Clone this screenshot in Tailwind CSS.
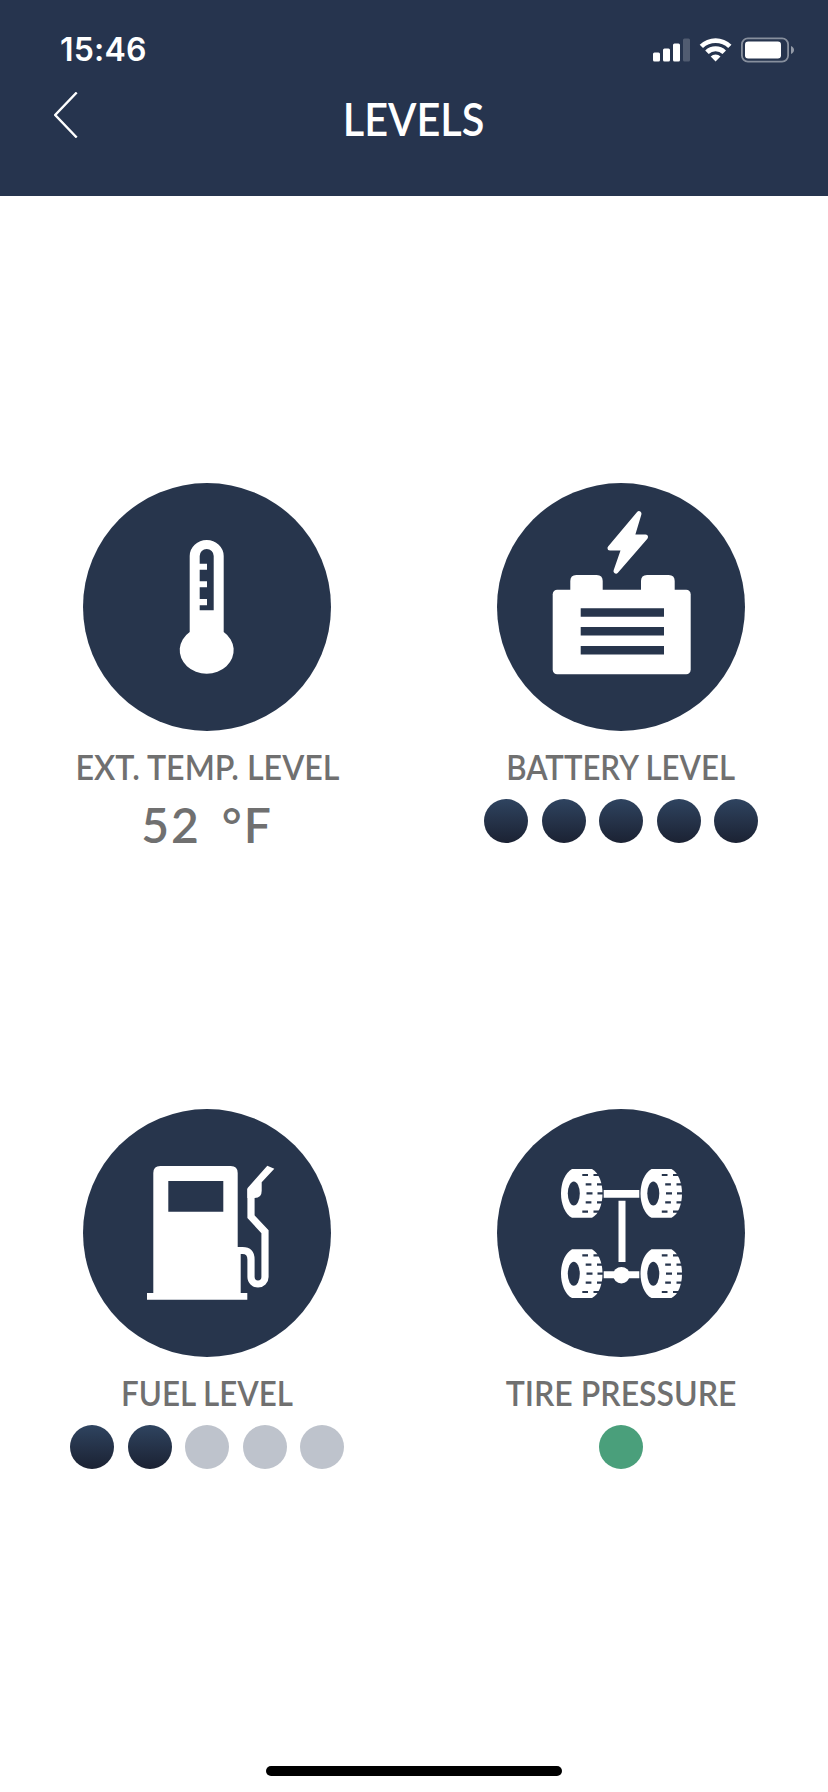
<!DOCTYPE html>
<html lang="en">

<head>
    <meta charset="UTF-8">
    <meta name="viewport" content="width=device-width, initial-scale=1.0">
    <title>Levels</title>

    <!-- Tailwind CSS -->
    <script src="https://cdn.jsdelivr.net/npm/@tailwindcss/browser@4"></script>
</head>

<body class="bg-white font-['Lato',sans-serif] font-semibold text-[#707070]">
    <div class="relative flex flex-col h-[1792px] w-[828px] overflow-hidden">

        <!-- Header -->
        <header class="h-[196px] bg-[#26344e] text-white">
            <!-- Status bar -->
            <div class="flex justify-between items-center h-[74px] pt-[25px] pl-[60px] pr-[34px]">
                <span class="font-['Inter',sans-serif] font-semibold text-[32px] leading-none tracking-[0.2px]">15:46</span>
                <svg class="w-[142px] h-[26px]" viewBox="652 36.5 142 26" fill="white">
                    <rect x="653" y="52" width="7" height="9" rx="1.5" />
                    <rect x="663" y="48" width="7" height="13" rx="1.5" />
                    <rect x="673" y="43" width="7" height="18" rx="1.5" />
                    <rect x="683" y="38" width="7" height="23" rx="1.5" fill-opacity=".2" />
                    <path d="M699.7 44.2a22.8 22.8 0 0 1 31.8 0l-3.3 3.4a18 18 0 0 0-25.2 0z" />
                    <path d="M705.2 50a15 15 0 0 1 20.8 0l-3.5 3.5a10 10 0 0 0-13.8 0z" />
                    <path d="M710.7 56a7 7 0 0 1 9.8 0l-4.9 5z" />
                    <rect x="741.9" y="37.9" width="46.2" height="23.2" rx="6" fill="none" stroke="white" stroke-opacity=".45" stroke-width="1.8" />
                    <rect x="745" y="41" width="36" height="17" rx="3.2" />
                    <path d="M791 45.500c4 1.500 4 6.500 0 8z" fill-opacity=".5" />
                </svg>
            </div>
            <!-- Title bar -->
            <div class="grid grid-cols-[1fr_auto_1fr] items-center h-[90px]">
                <svg class="w-6 h-[46px] ml-[54px] -mt-2" viewBox="0 0 24 46" fill="none" stroke="white" stroke-width="2.4">
                    <path d="M22.700.500 1.200 23l21.500 22.500" />
                </svg>
                <h1 class="text-[46px] leading-none scale-x-[0.9]">LEVELS</h1>
            </div>
        </header>

        <!-- Level cards -->
        <main class="grid grid-cols-2 auto-rows-[626px] pt-[287px] text-[35px]">
            <section class="flex flex-col items-center">
                <svg class="size-[248px]" viewBox="0 0 248 248" fill="white">
                    <circle cx="124" cy="124" r="124" fill="#27354c" />
                    <path d="M106.700 73a17 16 0 0 1 34 0v76a27 23.500 0 1 1-34 0z" />
                    <path d="M116.700 73a7 7 0 0 1 14 0v54.300h-14v-5h7.300V116h-7.300v-11.700h7.300v-6h-7.300V86.700h7.300v-6h-7.300z" fill="#27354c" />
                </svg>
                <h2 class="mt-[17px] leading-[36px] whitespace-nowrap scale-x-[0.92]">EXT. TEMP. LEVEL</h2>
                <p class="mt-[19px] text-[48px] leading-[44px] tracking-[2px] [word-spacing:7px] whitespace-nowrap">52 °F</p>
            </section>

            <section class="flex flex-col items-center">
                <svg class="size-[248px]" viewBox="0 0 248 248" fill="white">
                    <circle cx="124" cy="124" r="124" fill="#27354c" />
                    <path d="M142 30.700 135 54h13.500L119 88l8-23h-14z" stroke="white" stroke-width="5" stroke-linejoin="round" />
                    <path d="M73.300 110V98q0-6 6-6h20.400q6 0 6 6v12zM144 110V98q0-6 6-6h21.700q6 0 6 6v12z" />
                    <rect x="55.700" y="106.700" width="138" height="84.600" rx="4.500" />
                    <path d="M83.700 125.300H167v8.400H83.700zM83.700 144H167v8.400H83.700zM83.700 163H167v8.400H83.700z" fill="#27354c" />
                </svg>
                <h2 class="mt-[17px] leading-[36px] whitespace-nowrap scale-x-[0.89]">BATTERY LEVEL</h2>
                <div class="flex justify-between w-[274px] mt-[15px]">
                    <span class="size-11 rounded-full bg-linear-to-b from-[#2f4460] to-[#1b2233]"></span>
                    <span class="size-11 rounded-full bg-linear-to-b from-[#2f4460] to-[#1b2233]"></span>
                    <span class="size-11 rounded-full bg-linear-to-b from-[#2f4460] to-[#1b2233]"></span>
                    <span class="size-11 rounded-full bg-linear-to-b from-[#2f4460] to-[#1b2233]"></span>
                    <span class="size-11 rounded-full bg-linear-to-b from-[#2f4460] to-[#1b2233]"></span>
                </div>
            </section>

            <section class="flex flex-col items-center">
                <svg class="size-[248px]" viewBox="0 0 248 248" fill="white">
                    <circle cx="124" cy="124" r="124" fill="#27354c" />
                    <path d="M70.300 64q0-7 7-7h70.400q7 0 7 7v80h3v40h6.600v6.700H64V184h6.300z" />
                    <path d="M85.300 72h55v30.700h-55z" fill="#27354c" />
                    <path d="M154 141.500h5.500q8.500 0 8.500 9V168a7 7 0 0 0 14 0v-45.300l-14-15V80" fill="none" stroke="white" stroke-width="7.200" />
                    <path d="m164.400 79.300 19.900-22.600 7 3-12.600 13.600v8.400q0 7.300-7 7.300h-7.300z" />
                </svg>
                <h2 class="mt-[17px] leading-[36px] whitespace-nowrap scale-x-[0.895]">FUEL LEVEL</h2>
                <div class="flex justify-between w-[274px] mt-[15px]">
                    <span class="size-11 rounded-full bg-linear-to-b from-[#2f4460] to-[#1b2233]"></span>
                    <span class="size-11 rounded-full bg-linear-to-b from-[#2f4460] to-[#1b2233]"></span>
                    <span class="size-11 rounded-full bg-[#bec3cc]"></span>
                    <span class="size-11 rounded-full bg-[#bec3cc]"></span>
                    <span class="size-11 rounded-full bg-[#bec3cc]"></span>
                </div>
            </section>

            <section class="flex flex-col items-center">
                <svg class="size-[248px]" viewBox="0 0 248 248" fill="white">
                    <defs>
                        <g id="tire">
                            <path d="M11 0h20c7 4 10.500 14 10.500 24.400S38 45 31 48.700H11C4 45 0 35 0 24.400S4 4 11 0z" />
                            <ellipse cx="12.800" cy="24.400" rx="6" ry="12" fill="#27354c" />
                            <path d="M21.300 6H27M32.500 6H39M24.700 15.300h5.700M36 15.300h6M25.500 24.400h6M36.500 24.400h6M24.700 33.400h5.700M36 33.400h6M21.300 42.700H27M32.500 42.700H39" stroke="#27354c" stroke-width="2.200" />
                        </g>
                    </defs>
                    <circle cx="124" cy="124" r="124" fill="#27354c" />
                    <use href="#tire" x="64" y="60" />
                    <use href="#tire" x="143.500" y="60" />
                    <use href="#tire" x="64" y="140.300" />
                    <use href="#tire" x="143.500" y="140.300" />
                    <path d="M106.700 81h35.600v7.700h-35.600zM121.500 91.700h7V153h-7zM106.700 162.200h35.600v7h-35.600z" />
                    <circle cx="124.400" cy="166.200" r="8.300" />
                </svg>
                <h2 class="mt-[17px] leading-[36px] whitespace-nowrap scale-x-[0.915]">TIRE PRESSURE</h2>
                <span class="mt-[15px] size-11 rounded-full bg-[#4a9f7b]"></span>
            </section>
        </main>

        <!-- Home indicator -->
        <div class="absolute bottom-4 left-[266px] w-[296px] h-[10px] rounded-full bg-black"></div>
    </div>
</body>

</html>
